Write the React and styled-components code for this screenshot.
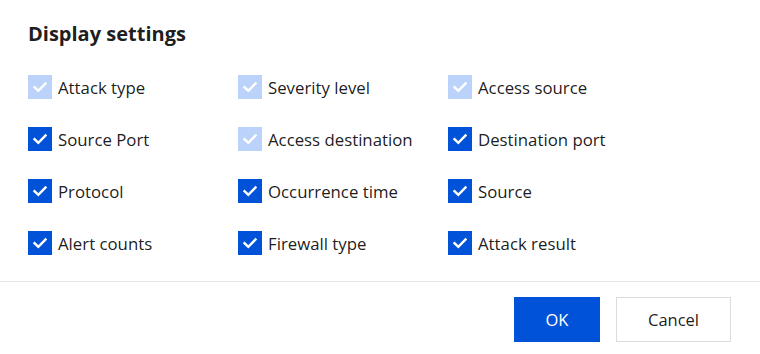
import React from 'react';
import styled, { createGlobalStyle } from 'styled-components';

const GlobalStyle = createGlobalStyle`
    html, body {
        margin: 0;
        padding: 0;
        background: #ffffff;
    }
    body {
        font-family: "Open Sans", "Noto Sans", sans-serif;
        color: rgba(0, 0, 0, 0.9);
    }
`;

const Dialog = styled.div`
    width: 760px;
    height: 354px;
    display: flex;
    flex-direction: column;
    background: #ffffff;
`;

const Body = styled.div`
    padding: 20px 28px 0 28px;
    flex: 1;
`;

const Title = styled.h2`
    margin: 0;
    font-size: 20px;
    font-weight: 700;
    line-height: 28px;
    color: rgba(0, 0, 0, 0.9);
`;

const Grid = styled.div`
    display: grid;
    grid-template-columns: 210px 210px 210px;
    grid-auto-rows: 52px;
    margin-top: 13px;
`;

const Option = styled.label`
    display: flex;
    align-items: center;
    gap: 6px;
    height: 52px;
    font-size: 16.8px;
    color: rgba(0, 0, 0, 0.9);
    cursor: ${p => (p.disabled ? 'not-allowed' : 'pointer')};
`;

const Box = styled.span`
    width: 24px;
    height: 24px;
    flex-shrink: 0;
    display: flex;
    align-items: center;
    justify-content: center;
    background: ${p => (p.disabled ? '#bbd3fb' : '#0052d9')};
`;

const Footer = styled.div`
    border-top: 1px solid #e7e7e7;
    display: flex;
    justify-content: flex-end;
    gap: 16px;
    padding: 15px 29px 12px 0;
`;

const Button = styled.button`
    height: 45px;
    min-width: ${p => (p.primary ? '86px' : '115px')};
    font-family: "Open Sans", "Noto Sans", sans-serif;
    font-size: 16.5px;
    border: 1px solid ${p => (p.primary ? '#0052d9' : '#dcdcdc')};
    background: ${p => (p.primary ? '#0052d9' : '#ffffff')};
    color: ${p => (p.primary ? '#ffffff' : 'rgba(0, 0, 0, 0.9)')};
    cursor: pointer;
`;

const options = [
    { label: 'Attack type', disabled: true },
    { label: 'Severity level', disabled: true },
    { label: 'Access source', disabled: true },
    { label: 'Source Port' },
    { label: 'Access destination', disabled: true },
    { label: 'Destination port' },
    { label: 'Protocol' },
    { label: 'Occurrence time' },
    { label: 'Source' },
    { label: 'Alert counts' },
    { label: 'Firewall type' },
    { label: 'Attack result' },
];

const Check = () => (
    <svg width="16" height="16" viewBox="0 0 16 16" fill="none">
        <path d="M2.5 8.2 L6.3 11.8 L13.5 4.5" stroke="#ffffff" strokeWidth="2.4" strokeLinecap="square" />
    </svg>
);

export default function App() {
    return (
        <Dialog>
            <GlobalStyle />
            <Body>
                <Title>Display settings</Title>
                <Grid>
                    {options.map(opt =>
                        <Option key={opt.label} disabled={opt.disabled}>
                            <Box disabled={opt.disabled}><Check /></Box>
                            {opt.label}
                        </Option>
                    )}
                </Grid>
            </Body>
            <Footer>
                <Button primary>OK</Button>
                <Button>Cancel</Button>
            </Footer>
        </Dialog>
    );
}
